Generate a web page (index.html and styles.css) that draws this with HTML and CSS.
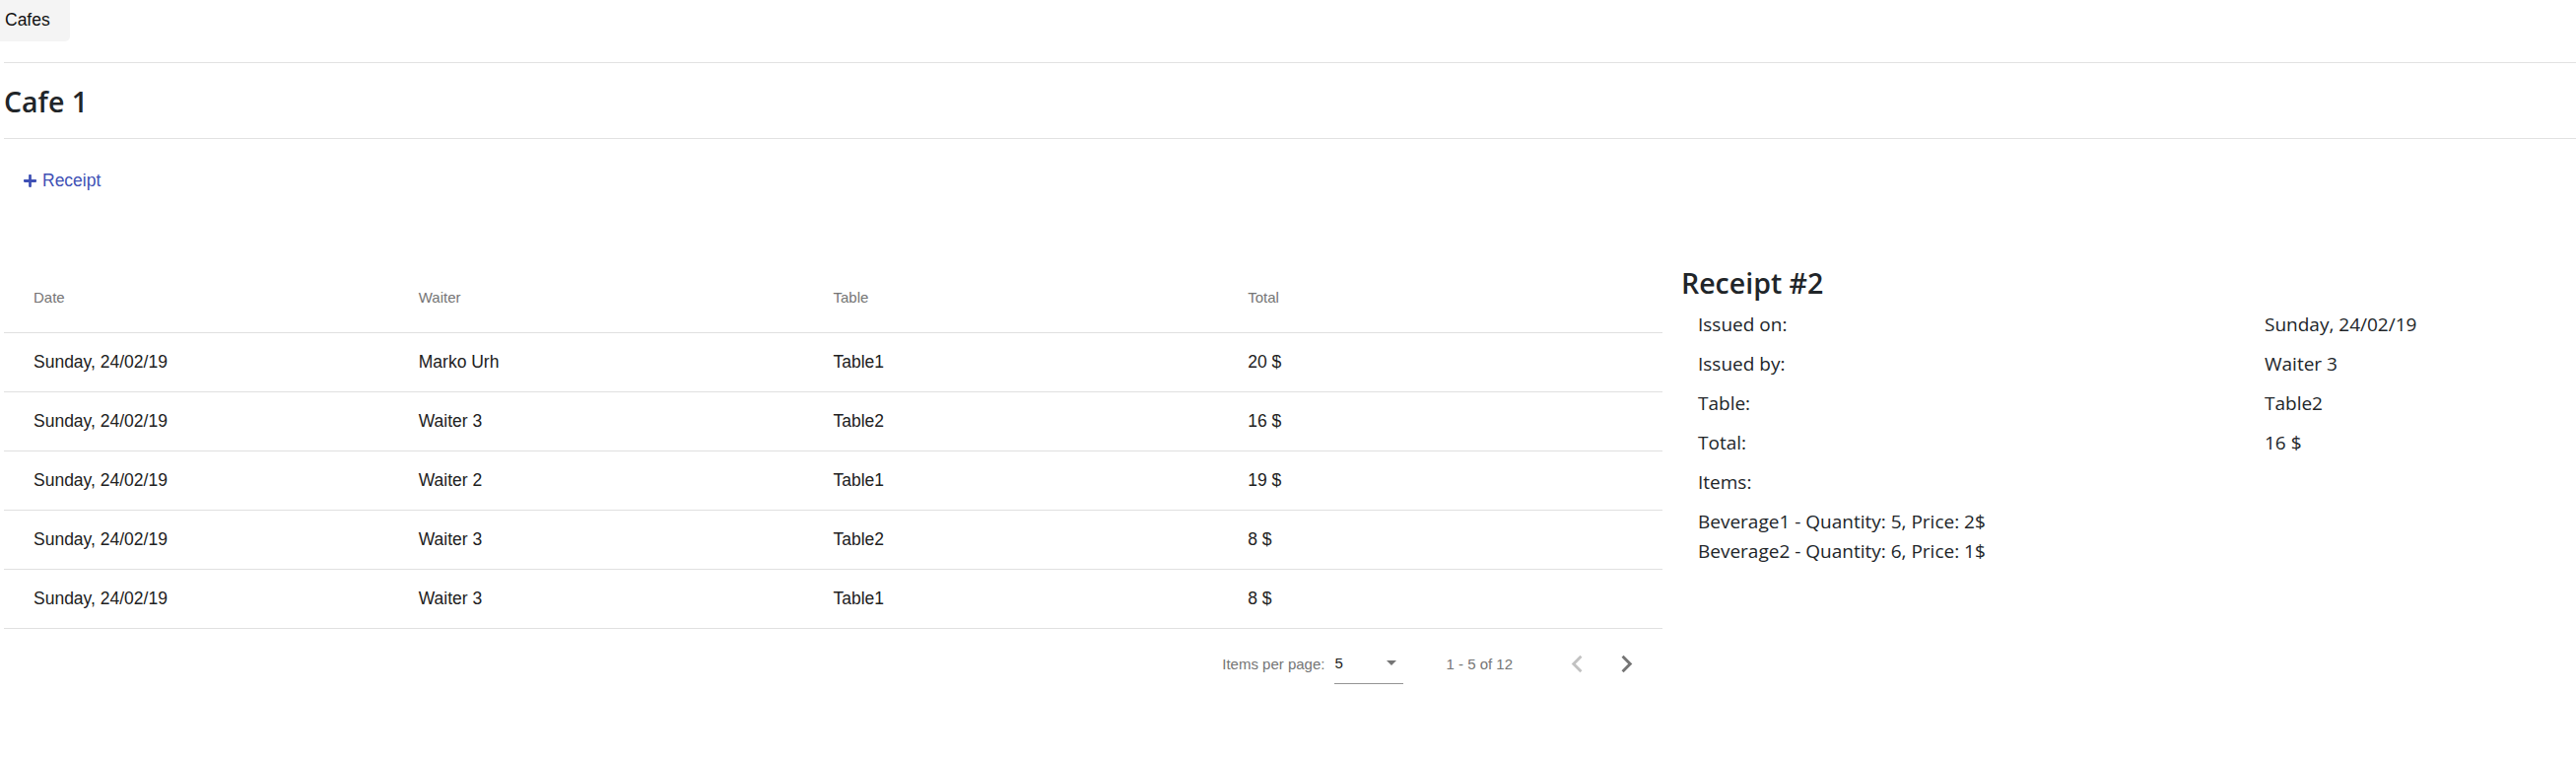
FILE: index.html
```html
<!DOCTYPE html>
<html lang="en">
<head>
<meta charset="utf-8">
<title>Cafe 1</title>
<link rel="stylesheet" href="styles.css">
</head>
<body>
<nav class="tabs"><a class="tab">Cafes</a></nav>
<div class="content">
  <hr class="rule rule-top">
  <h4 class="cafe-title">Cafe 1</h4>
  <hr class="rule rule-bottom">
  <button class="add-btn" type="button">
    <svg class="plus" viewBox="0 0 448 512" width="13" height="15"><path fill="currentColor" d="M416 208H272V64c0-17.670-14.330-32-32-32h-32c-17.670 0-32 14.330-32 32v144H32c-17.670 0-32 14.330-32 32v32c0 17.670 14.330 32 32 32h144v144c0 17.670 14.330 32 32 32h32c17.670 0 32-14.330 32-32V304h144c17.670 0 32-14.330 32-32v-32c0-17.670-14.330-32-32-32z"/></svg>
    <span>Receipt</span>
  </button>
  <div class="main">
    <section class="table-wrap">
      <div class="mtable">
        <div class="mrow head">
          <div class="cell">Date</div><div class="cell">Waiter</div><div class="cell">Table</div><div class="cell">Total</div>
        </div>
        <div class="mrow">
          <div class="cell">Sunday, 24/02/19</div><div class="cell">Marko Urh</div><div class="cell">Table1</div><div class="cell">20 $</div>
        </div>
        <div class="mrow">
          <div class="cell">Sunday, 24/02/19</div><div class="cell">Waiter 3</div><div class="cell">Table2</div><div class="cell">16 $</div>
        </div>
        <div class="mrow">
          <div class="cell">Sunday, 24/02/19</div><div class="cell">Waiter 2</div><div class="cell">Table1</div><div class="cell">19 $</div>
        </div>
        <div class="mrow">
          <div class="cell">Sunday, 24/02/19</div><div class="cell">Waiter 3</div><div class="cell">Table2</div><div class="cell">8 $</div>
        </div>
        <div class="mrow">
          <div class="cell">Sunday, 24/02/19</div><div class="cell">Waiter 3</div><div class="cell">Table1</div><div class="cell">8 $</div>
        </div>
      </div>
      <div class="paginator">
        <span class="pg-label">Items per page:</span>
        <div class="pg-select"><span class="pg-value">5</span><span class="pg-arrow"></span></div>
        <span class="pg-range">1 - 5 of 12</span>
        <button class="pg-btn disabled" type="button" aria-label="Previous page"><svg viewBox="0 0 24 24" width="35" height="35"><path fill="currentColor" d="M15.41 7.41L14 6l-6 6 6 6 1.41-1.41L10.83 12z"/></svg></button>
        <button class="pg-btn" type="button" aria-label="Next page"><svg viewBox="0 0 24 24" width="35" height="35"><path fill="currentColor" d="M10 6L8.59 7.41 13.17 12l-4.58 4.59L10 18l6-6z"/></svg></button>
      </div>
    </section>
    <aside class="receipt">
      <h4 class="receipt-title">Receipt #2</h4>
      <div class="details">
        <div>Issued on:</div><div>Sunday, 24/02/19</div>
        <div>Issued by:</div><div>Waiter 3</div>
        <div>Table:</div><div>Table2</div>
        <div>Total:</div><div>16 $</div>
        <div>Items:</div><div></div>
      </div>
      <ul class="items">
        <li>Beverage1 - Quantity: 5, Price: 2$</li>
        <li>Beverage2 - Quantity: 6, Price: 1$</li>
      </ul>
    </aside>
  </div>
</div>
</body>
</html>
```
FILE: styles.css
```css
* { box-sizing: border-box; }

body {
  margin: 0;
  background: #fff;
  color: #212121;
  font-family: "Liberation Sans", Arial, sans-serif;
}

.tabs {
  display: flex;
  height: 42px;
}

.tab {
  display: block;
  width: 71px;
  height: 42px;
  padding: 10px 0 0 5px;
  background: #f4f4f4;
  border-bottom-right-radius: 5px;
  font-size: 17.5px;
  line-height: 20px;
  color: #111;
}

.content {
  padding-left: 4px;
}

.rule {
  border: 0;
  border-top: 1px solid #e2e2e2;
  margin: 0;
  height: 0;
}

.rule-top { margin-top: 21px; }
.rule-bottom { margin-top: 19px; }

.cafe-title {
  margin: 21px 0 0;
  height: 36px;
  font-family: "Open Sans", "Noto Sans", sans-serif;
  font-size: 28.5px;
  font-weight: 600;
  line-height: 36px;
  color: #212529;
}

.add-btn {
  margin-top: 20px;
  height: 45px;
  padding: 0 20px;
  border: 0;
  background: none;
  display: flex;
  align-items: center;
  gap: 6px;
  color: #3f51b5;
  font-family: "Liberation Sans", Arial, sans-serif;
  font-size: 17.5px;
}

.plus { display: block; }

.main {
  display: flex;
  margin-top: 62px;
}

.table-wrap {
  flex: none;
  width: 1683px;
}

.mrow {
  display: grid;
  grid-template-columns: repeat(4, 1fr);
  align-items: center;
  height: 60px;
  border-bottom: 1px solid #e0e0e0;
  font-size: 17.5px;
  color: #212121;
}

.mrow .cell:first-child { padding-left: 30px; }

.mrow.head {
  height: 70px;
  padding-bottom: 2px;
  font-size: 15px;
  color: #757575;
}

.paginator {
  display: flex;
  align-items: center;
  justify-content: flex-end;
  height: 70px;
  padding-right: 12px;
  font-size: 15px;
  color: #757575;
}

.pg-select {
  width: 70px;
  height: 30px;
  margin-left: 10px;
  margin-top: 12px;
  border-bottom: 1px solid #949494;
  display: flex;
  align-items: flex-start;
  justify-content: space-between;
}

.pg-value {
  color: #212121;
  line-height: 18px;
}

.pg-arrow {
  width: 0;
  height: 0;
  margin: 6px 7px 0 0;
  border-left: 5px solid transparent;
  border-right: 5px solid transparent;
  border-top: 5px solid #757575;
}

.pg-range {
  margin-left: 43px;
  margin-right: 40px;
}

.pg-btn {
  width: 50px;
  height: 50px;
  padding: 0;
  border: 0;
  background: none;
  display: flex;
  align-items: center;
  justify-content: center;
  color: #757575;
}

.pg-btn svg { display: block; }
.pg-btn.disabled { color: #c2c2c2; }

.receipt {
  flex: 1;
  margin-left: 19px;
  font-family: "Open Sans", "Noto Sans", sans-serif;
  color: #212529;
}

.receipt-title {
  margin: 1px 0 9px;
  height: 36px;
  font-size: 28.5px;
  font-weight: 600;
  line-height: 36px;
}

.details {
  display: grid;
  grid-template-columns: 575px auto;
  row-gap: 10px;
  padding-left: 17px;
  font-size: 19px;
  line-height: 30px;
}

.items {
  list-style: none;
  margin: 10px 0 0;
  padding: 0 0 0 17px;
  font-size: 19px;
  line-height: 30px;
}
```
